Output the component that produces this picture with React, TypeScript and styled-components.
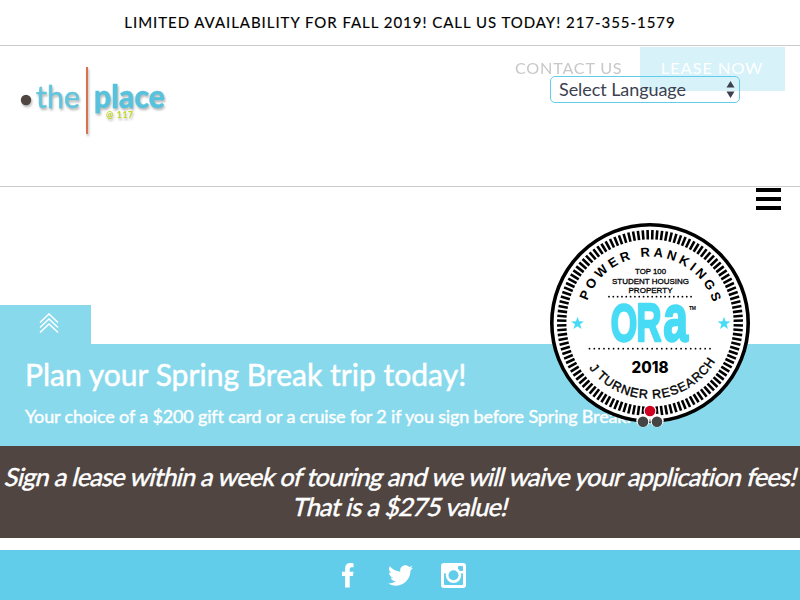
import React from "react";
import styled, { createGlobalStyle } from "styled-components";
import { FaTwitter } from "react-icons/fa";

const GlobalStyle = createGlobalStyle`
  * { box-sizing: border-box; }
  body { margin: 0; background: #fff; font-family: Lato, sans-serif; overflow: hidden; }
  h2, p { margin: 0; font-weight: 400; }
`;

const Page = styled.div`
  display: flex;
  flex-direction: column;
  width: 800px;
  height: 600px;
  overflow: hidden;
  position: relative;
`;

const Notice = styled.div`
  height: 46px;
  flex: none;
  border-bottom: 1px solid #ccc;
  text-align: center;
  font-size: 15px;
  line-height: 45px;
  letter-spacing: 0.96px;
  color: #000;
  -webkit-text-stroke: 0.15px #000;
`;

const Header = styled.header`
  display: flex;
  justify-content: space-between;
  align-items: flex-start;
  height: 141px;
  flex: none;
  padding: 1px 15px 0 15px;
  border-bottom: 1px solid #ccc;
`;

const Logo = styled.svg`
  width: 160px;
  height: 90px;
  margin-top: 13px;
  filter: drop-shadow(1px 2px 1px rgba(0, 0, 0, 0.28));
`;

const Nav = styled.nav`
  display: flex;
`;

const NavLink = styled.a<{ $filled?: boolean }>`
  display: flex;
  justify-content: center;
  align-items: center;
  width: ${(p) => (p.$filled ? 145 : 142)}px;
  height: 44px;
  padding-bottom: 2px;
  background: ${(p) => (p.$filled ? "#d8f2f9" : "transparent")};
  color: ${(p) => (p.$filled ? "#fff" : "#c8c8c8")};
  font-size: 15px;
  letter-spacing: 0.7px;
  white-space: nowrap;
`;

const NavText = styled.span<{ $x: number }>`
  transform: scaleX(${(p) => p.$x});
`;

const LanguageSelect = styled.div`
  position: absolute;
  left: 550px;
  top: 76px;
  width: 190px;
  height: 27px;
  display: flex;
  align-items: center;
  justify-content: space-between;
  padding: 0 4px 1px 8px;
  border: 1px solid #62cdea;
  border-radius: 5px;
  font-size: 18px;
  letter-spacing: -0.07px;
  color: #3b4150;
`;

const MenuButton = styled.div`
  display: flex;
  flex-direction: column;
  gap: 5px;
  width: 25px;
  margin: 1px 19px 0 auto;
`;

const MenuBar = styled.span`
  height: 4px;
  background: #000;
`;

const Hero = styled.main`
  height: 259px;
  flex: none;
  display: flex;
  flex-direction: column;
`;

const PromoTab = styled.div`
  width: 91px;
  height: 39px;
  margin-top: auto;
  padding: 8px 0 0 39px;
  background: #89d9ed;
`;

const Promo = styled.section`
  height: 102px;
  padding: 11px 25px 0;
  background: #89d9ed;
  color: #fff;
  white-space: nowrap;
`;

const PromoTitle = styled.h2`
  font-size: 30px;
  line-height: 38px;
  letter-spacing: 0.03px;
  -webkit-text-stroke: 0.5px #fff;
`;

const PromoText = styled.p`
  margin-top: 11px;
  font-size: 18px;
  line-height: 24px;
  letter-spacing: -0.16px;
  -webkit-text-stroke: 0.4px #fff;
`;

const Offer = styled.section`
  display: flex;
  flex-direction: column;
  align-items: center;
  height: 92px;
  flex: none;
  padding: 15px 0 0 3px;
  background: #504541;
  color: #fff;
  font-size: 25px;
  line-height: 30px;
  letter-spacing: -0.58px;
  white-space: nowrap;
  -webkit-text-stroke: 0.5px #fff;
`;

const SlantedLine = styled.p`
  transform: skewX(-14deg);
`;

const Footer = styled.footer`
  display: flex;
  justify-content: center;
  align-items: center;
  height: 50px;
  margin-top: 12px;
  padding-left: 7px;
  flex: none;
  background: #62cdea;
  color: #fff;

  svg + svg { margin-left: 28px; }
  svg:first-child { margin-right: 6px; }
`;

const Seal = styled.svg`
  position: absolute;
  left: 550px;
  top: 223px;
  width: 200px;
  height: 205px;
`;

function BrandLogo() {
  return (
    <Logo viewBox="15 60 160 90" fontFamily="Lato, sans-serif">
      <circle cx="26" cy="100" r="5.2" fill="#504541" />
      <text x="36" y="108" fontSize="31" fill="#62c5dc" stroke="#62c5dc" strokeWidth="0.5" textLength="44" lengthAdjust="spacingAndGlyphs">the</text>
      <rect x="86" y="67" width="2" height="67" fill="#d9734f" />
      <text x="94" y="108" fontSize="32" fontWeight="900" fill="#58c2dc" stroke="#58c2dc" strokeWidth="0.4" textLength="71" lengthAdjust="spacingAndGlyphs">place</text>
      <text x="106" y="118" fontSize="8.5" fontWeight="900" fill="#c4d92e" textLength="27">@ 117</text>
    </Logo>
  );
}

function Star({ x }: { x: number }) {
  const points = Array.from({ length: 10 }, (_, i) => {
    const r = i % 2 ? 2.7 : 6.8;
    const a = (i * Math.PI) / 5;
    return `${x + r * Math.sin(a)},${100.5 - r * Math.cos(a)}`;
  }).join(" ");
  return <polygon points={points} fill="#48dbf5" />;
}

function RankingSeal() {
  return (
    <Seal viewBox="0 0 200 205" fontFamily="'Liberation Sans', sans-serif">
      <defs>
        <path id="upper" d="M33.5 100 A66.5 66.5 0 0 1 166.5 100" />
        <path id="lower" d="M24.4 100 A75.6 75.6 0 0 0 175.6 100" />
      </defs>
      <circle cx="100" cy="100" r="98.2" fill="#fff" stroke="#000" strokeWidth="3.6" />
      {Array.from({ length: 120 }, (_, i) => (
        <rect key={i} x="98.7" y="7" width="2.6" height="9.4" transform={`rotate(${i * 3 + 1.5} 100 100)`} />
      ))}
      <text fontSize="13" fontWeight="700">
        <textPath href="#upper" startOffset="22.5" textLength="165">POWER RANKINGS</textPath>
      </text>
      <text fontSize="12.5" stroke="#000" strokeWidth="0.4">
        <textPath href="#lower" startOffset="48" textLength="149">J TURNER RESEARCH</textPath>
      </text>
      <g fontSize="7.8" stroke="#000" strokeWidth="0.3" textAnchor="middle">
        <text x="100.5" y="51" textLength="31" lengthAdjust="spacingAndGlyphs">TOP 100</text>
        <text x="100.5" y="60.8" textLength="77" lengthAdjust="spacingAndGlyphs">STUDENT HOUSING</text>
        <text x="100.5" y="70.4" textLength="44" lengthAdjust="spacingAndGlyphs">PROPERTY</text>
      </g>
      <path d="M59 73.7H142" stroke="#000" strokeWidth="1.8" strokeLinecap="round" strokeDasharray="0 4.32" />
      <path d="M39.5 125.7H161" stroke="#000" strokeWidth="1.8" strokeLinecap="round" strokeDasharray="0 4.82" />
      <g fill="#48dbf5" fontWeight="700" stroke="#48dbf5" strokeWidth="2.4" strokeLinejoin="round">
        <text transform="translate(60.6 117.6) scale(.66 1)" fontSize="51.5">O</text>
        <text transform="translate(86.2 118.1) scale(.64 1)" fontSize="54">R</text>
        <text transform="translate(113.2 117.8) scale(.66 1)" fontSize="67.5">a</text>
      </g>
      <text x="139" y="87" fontSize="5" fontWeight="700" textLength="7">TM</text>
      <Star x={27.5} />
      <Star x={174} />
      <text x="81.5" y="149.8" fontSize="15.5" fontWeight="800" fontFamily="Inter, sans-serif" textLength="37" lengthAdjust="spacingAndGlyphs">2018</text>
      <circle cx="93" cy="197.5" r="6.7" fill="#fff" />
      <circle cx="107" cy="197.5" r="6.7" fill="#fff" />
      <circle cx="100" cy="188" r="6.4" fill="#fff" />
      <circle cx="93" cy="198.7" r="5.3" fill="#444" />
      <circle cx="107" cy="198.7" r="5.3" fill="#444" />
      <circle cx="100" cy="188" r="5.3" fill="#d00020" />
    </Seal>
  );
}

function LetterIcon() {
  return (
    <svg width="12" height="25" viewBox="0 0 12 25" fill="currentColor">
      <path d="M11.5 .3V4.3H9.3Q7.7 4.3 7.7 6V8.7H11.5L11 12.9H7.7V24.5H3.1V12.9H0V8.7H3.1V5.6Q3.1 .1 8.3 .1Z" />
    </svg>
  );
}

function CameraIcon() {
  return (
    <svg width="25" height="25" viewBox="0 0 25 25">
      <rect width="25" height="25" rx="3" fill="#fff" />
      <path d="M3 10.5V21q0 1 1 1H21q1 0 1-1V10.5Z" fill="#62cdea" />
      <rect x="17" y="3" width="5" height="5" rx="1" fill="#62cdea" />
      <circle cx="12.5" cy="12.2" r="7.7" fill="#fff" />
      <circle cx="12.5" cy="12.2" r="5" fill="#62cdea" />
    </svg>
  );
}

export default function App() {
  return (
    <>
      <GlobalStyle />
      <Page>
        <Notice>LIMITED AVAILABILITY FOR FALL 2019! CALL US TODAY! 217-355-1579</Notice>
        <Header>
          <BrandLogo />
          <Nav>
            <NavLink><NavText $x={1.08}>CONTACT US</NavText></NavLink>
            <NavLink $filled><NavText $x={1.11}>LEASE NOW</NavText></NavLink>
          </Nav>
        </Header>
        <Hero>
          <MenuButton><MenuBar /><MenuBar /><MenuBar /></MenuButton>
          <PromoTab>
            <svg width="20" height="21" viewBox="0 0 20 21" fill="none" stroke="#fff" strokeWidth="1.5">
              <path d="M1 9.5 10 1 19 9.5M1 14.5 10 6 19 14.5M1 19.5 10 11 19 19.5" />
            </svg>
          </PromoTab>
          <Promo>
            <PromoTitle>Plan your Spring Break trip today!</PromoTitle>
            <PromoText>Your choice of a $200 gift card or a cruise for 2 if you sign before Spring Break!</PromoText>
          </Promo>
        </Hero>
        <Offer>
          <SlantedLine>Sign a lease within a week of touring and we will waive your application fees!</SlantedLine>
          <SlantedLine>That is a $275 value!</SlantedLine>
        </Offer>
        <Footer>
          <LetterIcon />
          <FaTwitter size={25} />
          <CameraIcon />
        </Footer>
        <LanguageSelect>
          Select Language
          <svg width="9" height="17" viewBox="0 0 9 17" fill="#3b4150">
            <path d="M4.5 0 8.5 6.5H.5ZM4.5 17 .5 10.5H8.5Z" />
          </svg>
        </LanguageSelect>
        <RankingSeal />
      </Page>
    </>
  );
}
